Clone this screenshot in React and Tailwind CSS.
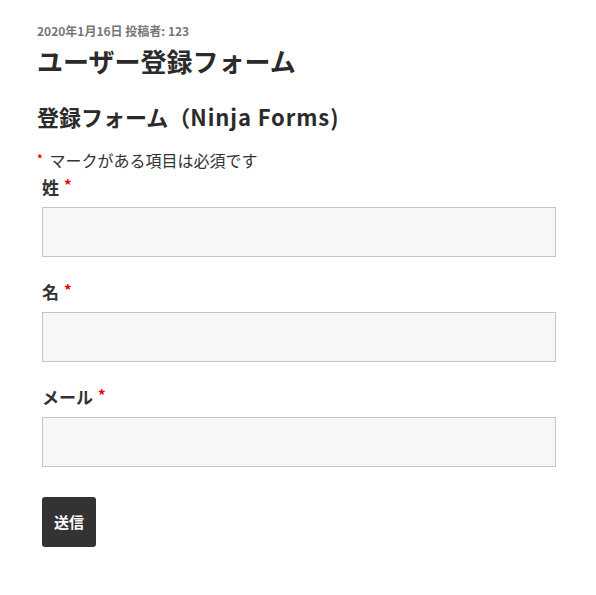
export default function App() {
  const font = { fontFamily: '"Noto Sans CJK JP", "Noto Sans", sans-serif' };
  const Field = ({ label, first }) => (
    <div className={first ? "mt-[7px]" : "mt-[25px]"}>
      <div className="h-[20px] flex items-center text-[17px] leading-[20px] font-bold text-[#333333]">
        <span>{label}</span>
        <span className="ml-[5px] text-[15px] font-bold text-[#ee0000] self-start leading-[16px]">*</span>
      </div>
      <div className="mt-[10px] h-[50px] w-[514px] bg-[#f7f7f7] border border-[#c4c4c4]" />
    </div>
  );
  return (
    <div className="w-[596px] h-[595px] bg-white pl-[37px] pt-[24px]" style={font}>
      <div className="h-[14px] text-[12px] leading-[14px] font-semibold text-[#767676]">
        2020年1月16日 投稿者: 123
      </div>
      <h1 className="mt-[7px] h-[32px] text-[26px] leading-[32px] font-bold text-[#2b2b2b]">
        ユーザー登録フォーム
      </h1>
      <h2 className="mt-[25px] h-[28px] text-[22px] leading-[28px] font-semibold text-[#2b2b2b]">
        登録フォーム（<span className="tracking-[0.9px]">Ninja Forms)</span>
      </h2>
      <div className="mt-[20px] h-[20px] flex items-center text-[16px] leading-[20px] text-[#333333]">
        <span className="text-[11px] text-[#ee0000] font-bold self-start leading-[14px] mt-[1px]">*</span>
        <span className="ml-[7px]">マークがある項目は必須です</span>
      </div>
      <div className="pl-[5px]">
        <Field label="姓" first />
        <Field label="名" />
        <Field label="メール" />
        <button className="mt-[30px] h-[50px] w-[54px] flex items-center justify-center rounded-[3px] bg-[#333333] text-white text-[15px] font-bold">
          送信
        </button>
      </div>
    </div>
  );
}
